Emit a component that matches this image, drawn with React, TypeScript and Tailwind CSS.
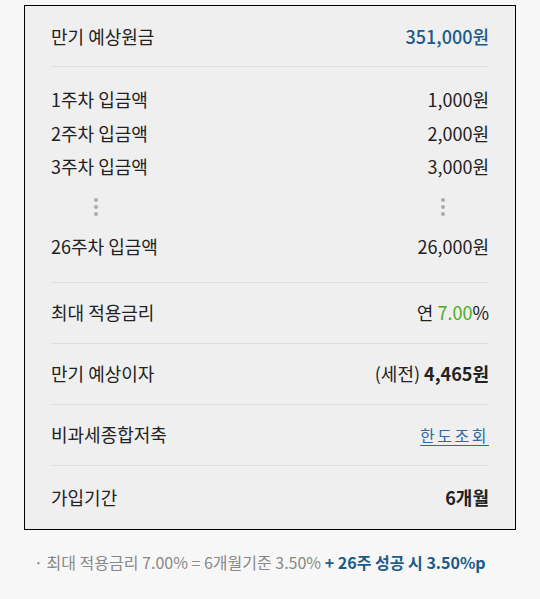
import type { ReactNode } from "react";

const font = { fontFamily: '"Noto Sans CJK KR", "Noto Sans", sans-serif' };

function Row({ label, children, className = "" }: { label: string; children: ReactNode; className?: string }) {
  return (
    <div className={`flex items-center justify-between text-[18px] text-[#222] ${className}`}>
      <span>{label}</span>
      <span>{children}</span>
    </div>
  );
}

function Dots() {
  return (
    <div className="flex flex-col gap-[3px]">
      <span className="h-[4px] w-[4px] rounded-full bg-[#aaa]" />
      <span className="h-[4px] w-[4px] rounded-full bg-[#aaa]" />
      <span className="h-[4px] w-[4px] rounded-full bg-[#aaa]" />
    </div>
  );
}

export default function App() {
  const weeks = [
    { label: "1주차 입금액", value: "1,000원" },
    { label: "2주차 입금액", value: "2,000원" },
    { label: "3주차 입금액", value: "3,000원" },
  ];

  return (
    <div className="min-h-[599px] w-[540px] bg-[#f7f7f7] pt-[5px]" style={font}>
      <div className="mx-[24px] border border-black bg-[#efefef] px-[26px]">
        <Row label="만기 예상원금" className="h-[61px] border-b border-[#dedede]">
          <span className="font-medium text-[#1b5b8c]">351,000원</span>
        </Row>

        <div className="border-b border-[#dedede] pt-[16px] pb-[18px]">
          {weeks.map((w) => (
            <Row key={w.label} label={w.label} className="h-[33.5px]">
              {w.value}
            </Row>
          ))}
          <div className="flex h-[46px] items-center justify-between pl-[43px] pr-[44px]">
            <Dots />
            <Dots />
          </div>
          <Row label="26주차 입금액" className="h-[34px]">
            26,000원
          </Row>
        </div>

        <Row label="최대 적용금리" className="h-[61px] border-b border-[#dedede]">
          연 <span className="text-[#4aad1c]">7.00</span>%
        </Row>

        <Row label="만기 예상이자" className="h-[61px] border-b border-[#dedede]">
          (세전) <span className="font-bold">4,465원</span>
        </Row>

        <Row label="비과세종합저축" className="h-[61px] border-b border-[#dedede]">
          <a className="text-[16px] tracking-[2.5px] text-[#2a6aa6] underline underline-offset-[3px]">한도조회</a>
        </Row>

        <Row label="가입기간" className="h-[63px]">
          <span className="font-bold">6개월</span>
        </Row>
      </div>

      <p className="mt-[20px] pl-[34px] text-[16px] text-[#888]">
        · 최대 적용금리 7.00% = 6개월기준 3.50%{" "}
        <span className="font-bold text-[#1b5b8c]">+ 26주 성공 시 3.50%p</span>
      </p>
    </div>
  );
}
